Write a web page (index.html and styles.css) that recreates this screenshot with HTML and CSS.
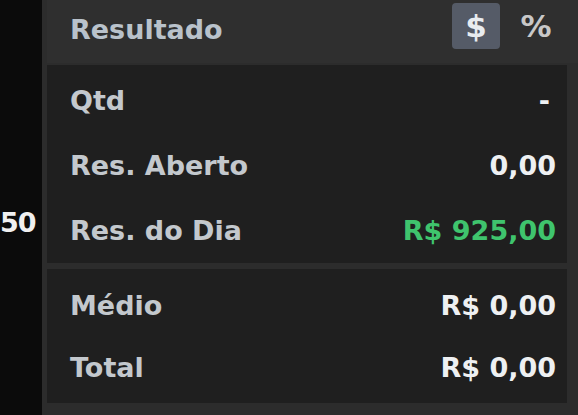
FILE: index.html
```html
<!DOCTYPE html>
<html lang="pt-BR">
<head>
  <meta charset="UTF-8">
  <title>Resultado</title>
  <link rel="stylesheet" href="styles.css">
</head>
<body>
  <div class="side">
    <div class="side-value">50</div>
  </div>
  <div class="panel">
    <div class="panel-header">
      <span class="title">Resultado</span>
      <div class="toggles">
        <button class="toggle active">$</button>
        <button class="toggle">%</button>
      </div>
    </div>
    <div class="section first">
      <div class="row"><span class="label">Qtd</span><span class="value empty">-</span></div>
      <div class="row"><span class="label">Res. Aberto</span><span class="value">0,00</span></div>
      <div class="row"><span class="label">Res. do Dia</span><span class="value positive">R$ 925,00</span></div>
    </div>
    <div class="section second">
      <div class="row"><span class="label">Médio</span><span class="value">R$ 0,00</span></div>
      <div class="row"><span class="label">Total</span><span class="value">R$ 0,00</span></div>
    </div>
  </div>
</body>
</html>
```

FILE: styles.css
```css
html, body {
  margin: 0;
  height: 100%;
}
body {
  display: flex;
  background-color: #0c0c0c;
  font-family: "DejaVu Sans", sans-serif;
  font-weight: bold;
  overflow: hidden;
}
.side {
  width: 42px;
  background-color: #0b0b0b;
  padding-top: 207px;
  box-sizing: border-box;
}
.side-value {
  color: #f0f0f0;
  font-size: 27px;
  letter-spacing: -1px;
}
.panel {
  flex: 1;
  background-color: #2c2c2c;
  padding: 0 11px 12px 5px;
  display: flex;
  flex-direction: column;
}
.panel-header {
  height: 63px;
  display: flex;
  align-items: center;
  justify-content: space-between;
  padding: 0 18px 0 23px;
  margin-right: -11px;
  box-sizing: border-box;
  background-color: #2f2f2f;
}
.title {
  color: #b9c2cb;
  font-size: 27px;
  margin-top: -4px;
}
.toggles {
  display: flex;
  align-items: center;
  gap: 12px;
  margin-top: -12px;
}
.toggle {
  border: none;
  background: none;
  color: #c8c8c8;
  font-family: inherit;
  font-weight: bold;
  font-size: 31px;
  padding: 0;
  width: 48px;
  height: 46px;
  border-radius: 4px;
}
.toggle.active {
  background-color: #555b67;
  color: #e8ecf0;
}
.section {
  background-color: #1f1f1f;
  padding: 3px 11px 0 23px;
  margin-top: 2px;
}
.section.second {
  margin-top: 6px;
  flex: 1;
  padding-top: 5px;
}
.row {
  height: 65px;
  display: flex;
  align-items: center;
  justify-content: space-between;
}
.second .row {
  height: 62px;
}
.label {
  color: #c3c8cd;
  font-size: 27px;
}
.value {
  color: #eef0f2;
  font-size: 27px;
}
.value.empty {
  margin-right: 6px;
}
.value.positive {
  color: #3fc46d;
}
```
